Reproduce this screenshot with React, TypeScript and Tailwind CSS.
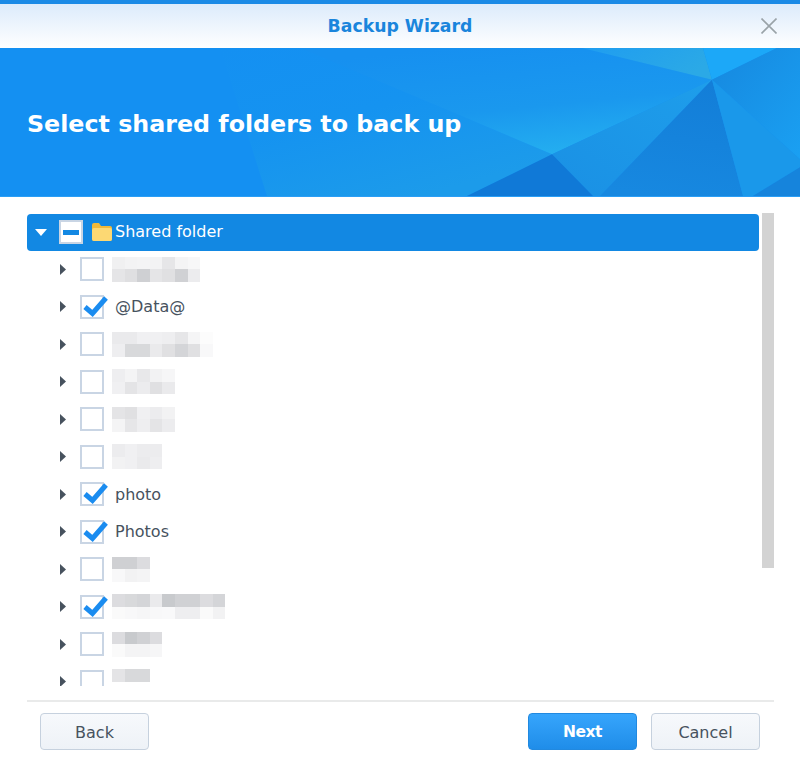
const font = "font-['DejaVu_Sans',sans-serif]"

type Row = { label?: string; checked?: boolean; top?: string[]; bottom?: string[] }

// Namen im Original verpixelt: je Zeile zwei Streifen aus Graustufen
const rows: Row[] = [
  { top: ['#f0f0f1', '#f3f3f4', '#f4f4f5', '#f3f3f4', '#e6e6e8', '#f4f4f5', '#f7f7f8'], bottom: ['#e5e5e7', '#dfdfe1', '#cfd0d3', '#e5e5e7', '#e0e0e2', '#d0d1d4', '#ececee'] },
  { label: '@Data@', checked: true },
  { top: ['#eaeaec', '#eaeaec', '#f0f0f2', '#f0f0f2', '#eeeef0', '#e6e6e8', '#f5f5f6', '#fcfcfc'], bottom: ['#eeeef0', '#d8d9db', '#d8d9db', '#eaeaec', '#e0e0e2', '#d4d5d8', '#e0e0e2', '#f8f8f9'] },
  { top: ['#eeeef0', '#f4f4f5', '#e8e8ea', '#f2f2f3', '#f6f6f7'], bottom: ['#f0f0f2', '#e4e4e6', '#ececee', '#e0e0e2', '#eaeaec'] },
  { top: ['#e4e4e6', '#e0e0e2', '#f0f0f2', '#ececee', '#f2f2f3'], bottom: ['#f4f4f5', '#e6e6e8', '#eeeef0', '#e4e4e6', '#ececee'] },
  { top: ['#ececee', '#f0f0f2', '#ececee', '#ececee'], bottom: ['#f2f2f3', '#f0f0f2', '#eaeaec', '#eeeef0'] },
  { label: 'photo', checked: true },
  { label: 'Photos', checked: true },
  { top: ['#cfd0d3', '#cfd0d3', '#dcdcdf'], bottom: ['#f8f8f9', '#f2f2f3', '#f4f4f5'] },
  { checked: true, top: ['#dcdcdf', '#d8d9db', '#d4d5d8', '#eaeaec', '#c8cacd', '#d0d1d4', '#d0d1d4', '#dcdcdf', '#d4d5d8'], bottom: ['#fafafa', '#f8f8f9', '#f6f6f7', '#f8f8f9', '#f9f9fa', '#eeeef0', '#eeeef0', '#fafafa', '#f2f2f3'] },
  { top: ['#dcdcdf', '#c8cacd', '#d0d1d4', '#dcdcdf'], bottom: ['#fafafa', '#f4f4f5', '#f4f4f5', '#f6f6f7'] },
  { top: ['#e4e4e6', '#d8d9db', '#d8d9db'], bottom: ['#ffffff', '#ffffff', '#ffffff'] },
]

function BlurredName({ top = [], bottom = [] }: { top?: string[]; bottom?: string[] }) {
  return (
    <div className="ml-[8px] flex flex-col blur-[0.5px]">
      {[top, bottom].map((line, i) => (
        <div key={i} className="flex">
          {line.map((c, j) => (
            <div key={j} className="h-[12.5px] w-[12.6px]" style={{ backgroundColor: c }} />
          ))}
        </div>
      ))}
    </div>
  )
}

function Checkbox({ checked }: { checked?: boolean }) {
  return (
    <div className="relative h-6 w-6 shrink-0 border-2 border-[#c9d5e4] bg-white">
      {checked && (
        <svg className="absolute -top-[6px] left-[1px] h-[28px] w-[28px]" viewBox="0 0 28 28">
          <path d="M2 16 9.5 22.5 23 7" fill="none" stroke="#1a8cf0" strokeWidth="5" />
        </svg>
      )}
    </div>
  )
}

function Banner() {
  return (
    <div className="relative h-[149px] border-b border-[#2a9ef5] bg-[#1490f2]">
      <svg className="absolute inset-0 h-full w-full" viewBox="0 0 800 149" preserveAspectRatio="none">
        <defs>
          <linearGradient id="facetA" x1="0.35" y1="0" x2="0.75" y2="1">
            <stop offset="0" stopColor="#1690f0" />
            <stop offset="0.55" stopColor="#1a98ee" />
            <stop offset="1" stopColor="#25b1f0" />
          </linearGradient>
          <linearGradient id="facetB" x1="0" y1="0" x2="1" y2="0.4">
            <stop offset="0" stopColor="#1f9df0" />
            <stop offset="1" stopColor="#2ba9e6" />
          </linearGradient>
          <linearGradient id="facetC" x1="0" y1="1" x2="1" y2="0">
            <stop offset="0" stopColor="#1a90e4" />
            <stop offset="1" stopColor="#1e9eeb" />
          </linearGradient>
          <linearGradient id="facetD" x1="0" y1="0" x2="0.6" y2="1">
            <stop offset="0" stopColor="#1490f2" />
            <stop offset="0.5" stopColor="#1593f0" />
            <stop offset="1" stopColor="#1c9bea" />
          </linearGradient>
          <linearGradient id="facetE" x1="0.6" y1="0" x2="0.4" y2="1">
            <stop offset="0" stopColor="#137ed8" />
            <stop offset="1" stopColor="#1788e0" />
          </linearGradient>
          <linearGradient id="facetF" x1="0" y1="0" x2="1" y2="1">
            <stop offset="0" stopColor="#1688df" />
            <stop offset="1" stopColor="#1aa0f2" />
          </linearGradient>
        </defs>
        <polygon points="220,0 300,0 552,107 467,149 267,149" fill="url(#facetD)" />
        <polygon points="300,0 582,0 712,32 552,107" fill="url(#facetA)" />
        <polygon points="582,0 703,0 712,32" fill="url(#facetB)" />
        <polygon points="703,0 777,0 712,32" fill="#1ca8f8" />
        <polygon points="777,0 800,0 800,112 712,32" fill="url(#facetF)" />
        <polygon points="552,107 712,32 600,149 593,149" fill="url(#facetC)" />
        <polygon points="552,107 593,149 467,149" fill="#1079d7" />
        <polygon points="712,32 743,149 600,149" fill="url(#facetE)" />
        <polygon points="712,32 800,112 800,120 753,149 743,149" fill="#1a98ea" />
        <polygon points="753,149 800,120 800,149" fill="#1684dc" />
      </svg>
      <div className="relative flex h-full items-center pl-[27px] pt-[6px]">
        <h1 className="text-[23.75px] font-bold text-white">Select shared folders to back up</h1>
      </div>
    </div>
  )
}

function Button({ children, primary }: { children: string; primary?: boolean }) {
  return (
    <button
      className={
        primary
          ? 'h-[37px] w-[109px] rounded-[4px] border border-[#2189e0] bg-gradient-to-b from-[#36a5fc] to-[#1f8de9] pt-[2px] text-[15.5px] font-bold tracking-[-0.5px] text-white'
          : 'h-[37px] w-[109px] rounded-[4px] border border-[#c6d1de] bg-gradient-to-b from-[#f7f9fc] to-[#eef2f7] pt-[2px] text-base text-[#47525e]'
      }
    >
      {children}
    </button>
  )
}

export default function App() {
  return (
    <div className={`flex h-[760px] w-[800px] flex-col overflow-hidden bg-white ${font}`}>
      <div className="h-1 bg-[#1a8ae6]" />
      <header className="relative flex h-[44px] items-center justify-center bg-gradient-to-b from-[#dcebfb] to-white">
        <span className="pt-[2px] text-[17.3px] font-bold text-[#1a85dc]">Backup Wizard</span>
        <svg className="absolute right-[23px] top-[14px] h-4 w-4" viewBox="0 0 16 16">
          <path d="M0.5 0.5 15.5 15.5M15.5 0.5 0.5 15.5" stroke="#9aa3a8" strokeWidth="1.6" fill="none" />
        </svg>
      </header>
      <Banner />

      <div className="ml-[27px] mt-4 flex h-[473px] w-[747px] gap-[3px]">
        <div className="h-full w-[732px] overflow-hidden">
          <div className="mt-[1px] flex h-[36.5px] items-center rounded-[4px] bg-[#1288e3] pl-[8px] text-base text-white">
            <svg className="h-[7px] w-3" viewBox="0 0 12 7">
              <path d="M0 0H12L6 7Z" fill="#fff" />
            </svg>
            <div className="ml-[12px] flex h-6 w-6 items-center justify-center border-2 border-[#c9d5e4] bg-white">
              <div className="h-[5px] w-4 bg-[#1288e3]" />
            </div>
            <svg className="ml-[9px] h-[18px] w-[20px]" viewBox="0 0 20 18">
              <path d="M0 2Q0 0 2 0H7L9 3H18Q20 3 20 5V16Q20 18 18 18H2Q0 18 0 16Z" fill="#f0b93a" />
              <path d="M0 7Q0 5 2 5H18Q20 5 20 7V16Q20 18 18 18H2Q0 18 0 16Z" fill="#fcd873" />
            </svg>
            <span className="ml-[3px]">Shared folder</span>
          </div>
          {rows.map((row, i) => (
            <div key={i} className="flex h-[37.5px] items-center pl-[33px] text-base text-[#47525e]">
              <svg className="h-[11px] w-[6px]" viewBox="0 0 6 11">
                <path d="M0 0 6 5.5 0 11Z" fill="#47525e" />
              </svg>
              <div className="ml-[14px]">
                <Checkbox checked={row.checked} />
              </div>
              {row.label ? <span className="ml-[11px] pt-[1px]">{row.label}</span> : <BlurredName top={row.top} bottom={row.bottom} />}
            </div>
          ))}
        </div>
        <div className="h-[355px] w-3 bg-[#d3d3d3]" />
      </div>

      <footer className="ml-[27px] mr-[26px] mt-[14px] flex flex-1 items-start justify-between border-t-2 border-[#e9eaea] pl-[13px] pr-[14px] pt-[11px]">
        <Button>Back</Button>
        <div className="flex gap-[14px]">
          <Button primary>Next</Button>
          <Button>Cancel</Button>
        </div>
      </footer>
    </div>
  )
}
